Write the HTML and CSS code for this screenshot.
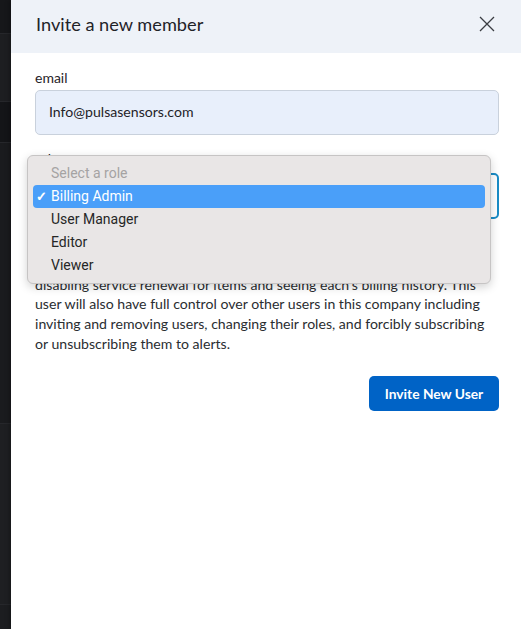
FILE: index.html
```html
<!DOCTYPE html>
<html lang="en">
<head>
    <meta charset="UTF-8">
    <meta name="viewport" content="width=device-width, initial-scale=1.0">
    <title>Invite a new member</title>
    <link rel="stylesheet" href="styles.css">
</head>
<body>

    <div class="backdrop">
        <div class="band band-a"></div>
        <div class="band band-b"></div>
        <div class="band band-c"></div>
        <div class="band band-d"></div>
        <div class="band band-e"></div>
    </div>

    <div class="modal">
        <div class="modal-header">
            <h1>Invite a new member</h1>
            <button class="close-btn" aria-label="Close">
                <svg width="16" height="16" viewBox="0 0 16 16">
                    <path d="M1 1 L15 15 M15 1 L1 15" stroke="#3a3d42" stroke-width="1.3" fill="none"/>
                </svg>
            </button>
        </div>

        <div class="modal-body">
            <label for="email">email</label>
            <input id="email" type="text" value="Info@pulsasensors.com">

            <label for="role" class="role-label">role</label>
            <div class="select-box" id="role">Billing Admin</div>

            <p class="role-info">
                Billing Admins can manage everything about the company's billing, like
                adding and removing payment methods, managing invoices, enabling and
                disabling service renewal for items and seeing each's billing history. This
                user will also have full control over other users in this company including
                inviting and removing users, changing their roles, and forcibly subscribing
                or unsubscribing them to alerts.
            </p>

            <div class="actions">
                <button class="primary-btn">Invite New User</button>
            </div>
        </div>

        <!-- native select popup, open -->
        <ul class="select-menu">
            <li class="placeholder">Select a role</li>
            <li class="selected"><span class="check">&#10003;</span>Billing Admin</li>
            <li>User Manager</li>
            <li>Editor</li>
            <li>Viewer</li>
        </ul>
    </div>

</body>
</html>
```

FILE: styles.css
```css
body {
    margin: 0;
    padding: 0;
    display: flex;
    height: 629px;
    overflow: hidden;
    font-family: Lato, "Noto Sans", sans-serif;
    background-color: #1b1c1f;
}
.backdrop {
    width: 11px;
    display: flex;
    flex-direction: column;
    background-color: #1c1d20;
}
.band {
    border-bottom: 1px solid #26272b;
}
.band-a { height: 33px; background-color: #16171a; }
.band-b { height: 67px; background-color: #1d1e21; }
.band-c { height: 40px; background-color: #141518; }
.band-d { height: 280px; background-color: #1a1b1e; }
.band-e { height: 180px; background-color: #1e1f22; }
.modal {
    position: relative;
    flex: 1;
    background-color: #fff;
    box-shadow: -2px 0 4px rgba(0, 0, 0, 0.25);
}
.modal-header {
    height: 53px;
    box-sizing: border-box;
    background-color: #eef2f8;
    display: flex;
    align-items: center;
    justify-content: space-between;
    padding: 0 26px 5px 25px;
}
h1 {
    margin: 0;
    font-size: 18.2px;
    font-weight: 400;
    color: #1f2328;
}
.close-btn {
    background: none;
    border: none;
    padding: 0;
    width: 16px;
    height: 16px;
    cursor: pointer;
}
.modal-body {
    padding: 17px 22px 0 24px;
    display: flex;
    flex-direction: column;
}
label {
    font-size: 14px;
    color: #1f2328;
    line-height: 16px;
}
input {
    margin-top: 4px;
    height: 45px;
    box-sizing: border-box;
    padding: 0 13px 3px;
    font-family: inherit;
    font-size: 14.1px;
    color: #1f2328;
    background-color: #e8effb;
    border: 1px solid #c9d1dc;
    border-radius: 5px;
}
.role-label {
    margin-top: 16px;
}
.select-box {
    margin-top: 6px;
    height: 46px;
    box-sizing: border-box;
    border: 2px solid #1a8cc6;
    border-radius: 5px;
    padding: 0 13px;
    display: flex;
    align-items: center;
    font-size: 14.1px;
}
.role-info {
    margin: 16px 0 0;
    font-size: 14.1px;
    line-height: 19.8px;
    color: #2a2d31;
}
.actions {
    display: flex;
    justify-content: flex-end;
    margin-top: 22px;
}
.primary-btn {
    width: 130px;
    height: 35px;
    background-color: #0063c6;
    color: #fff;
    border: none;
    border-radius: 5px;
    font-family: inherit;
    font-size: 13.8px;
    font-weight: 700;
    cursor: pointer;
}
.select-menu {
    position: absolute;
    top: 155px;
    left: 16px;
    width: 464px;
    box-sizing: border-box;
    margin: 0;
    padding: 6px 5px;
    list-style: none;
    background-color: #e9e6e6;
    border: 1px solid #c6c4c4;
    border-radius: 6px;
    box-shadow: 0 3px 10px rgba(0, 0, 0, 0.18);
    font-family: Roboto, "Noto Sans", sans-serif;
    font-size: 14px;
    color: #262626;
}
.select-menu li {
    height: 23px;
    line-height: 23px;
    padding-left: 18px;
    position: relative;
    border-radius: 4px;
}
.select-menu .placeholder {
    color: #a5a3a3;
}
.select-menu .selected {
    background-color: #4a9ff9;
    color: #fff;
}
.check {
    position: absolute;
    left: 3px;
    font-size: 13px;
    font-weight: 700;
}
```
